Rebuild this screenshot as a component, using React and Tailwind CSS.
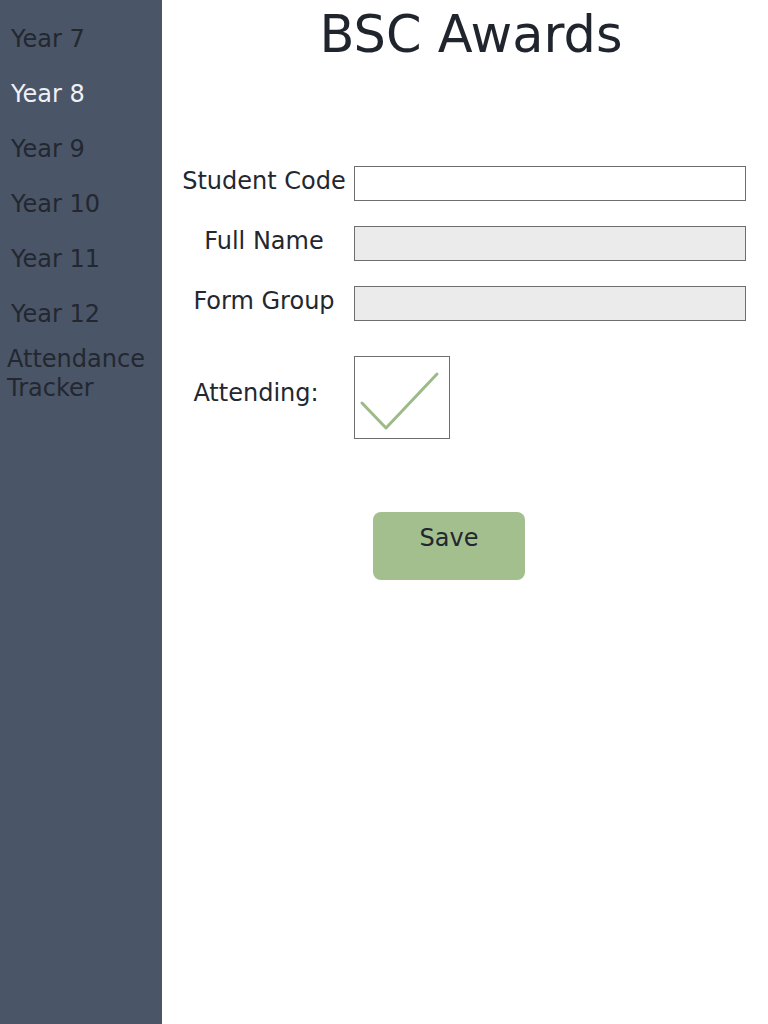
import React from "react";

const font = { fontFamily: '"DejaVu Sans", sans-serif' };

export default function App() {
  const years = ["Year 7", "Year 8", "Year 9", "Year 10", "Year 11", "Year 12"];
  return (
    <div className="flex w-[768px] h-[1024px] bg-white" style={font}>
      <aside className="w-[162px] shrink-0 bg-[#4a5568] pt-[11px]">
        {years.map((y) => (
          <div
            key={y}
            className={`h-[55px] flex items-center pl-[11px] text-[24px] ${
              y === "Year 8" ? "text-[#eef0f4]" : "text-[#23272f]"
            }`}
          >
            {y}
          </div>
        ))}
        <div className="mt-[4px] pl-[7px] text-[24px] leading-[29px] text-[#23272f]">
          Attendance
          <br />
          Tracker
        </div>
      </aside>
      <main className="flex-1 flex flex-col pl-[12px]">
        <h1 className="text-center text-[51px] leading-[60px] text-[#1f242d] pt-[5px]">
          BSC Awards
        </h1>
        <div className="mt-[101px] flex flex-col gap-[25px]">
          <div className="flex items-center">
            <div className="w-[180px] text-center text-[24px] leading-[31px] pb-[4px] text-[#23272f]">Student Code</div>
            <div className="w-[392px] h-[35px] border border-[#6e6e6e] bg-white" />
          </div>
          <div className="flex items-center">
            <div className="w-[180px] text-center text-[24px] leading-[31px] pb-[4px] text-[#23272f]">Full Name</div>
            <div className="w-[392px] h-[35px] border border-[#6e6e6e] bg-[#ebebeb]" />
          </div>
          <div className="flex items-center">
            <div className="w-[180px] text-center text-[24px] leading-[31px] pb-[4px] text-[#23272f]">Form Group</div>
            <div className="w-[392px] h-[35px] border border-[#6e6e6e] bg-[#ebebeb]" />
          </div>
        </div>
        <div className="mt-[35px] flex items-center">
          <div className="w-[180px] text-center pr-[16px] pb-[8px] text-[24px] leading-[31px] text-[#23272f]">Attending:</div>
          <div className="w-[96px] h-[83px] border border-[#6e6e6e] bg-white relative">
            <svg width="96" height="83" viewBox="0 0 96 83" className="absolute -left-px -top-px">
              <polyline
                points="8,47 32,72 83,18"
                fill="none"
                stroke="#9dbb89"
                strokeWidth="3"
                strokeLinecap="round"
                strokeLinejoin="round"
              />
            </svg>
          </div>
        </div>
        <div className="mt-[73px] flex pl-[199px]">
          <button className="w-[152px] h-[68px] rounded-[8px] bg-[#a3bf8d] text-[24px] leading-[31px] text-[#23272f] flex justify-center pt-[11px]">
            Save
          </button>
        </div>
      </main>
    </div>
  );
}
